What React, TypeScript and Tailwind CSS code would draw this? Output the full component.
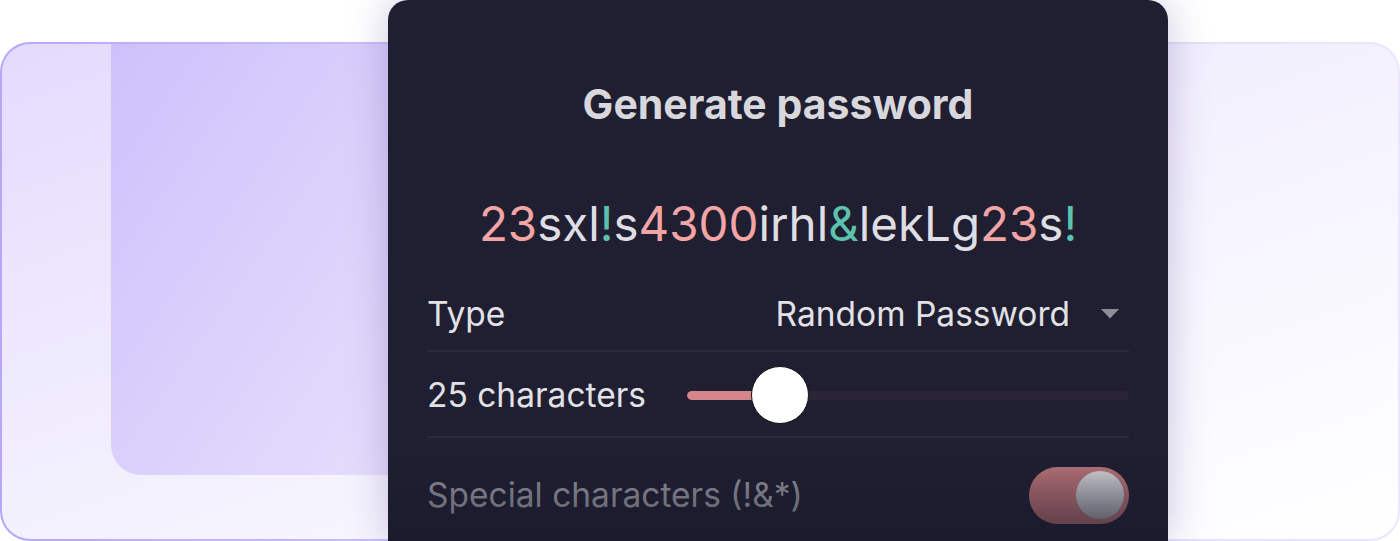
const pink = "text-[#f3a5a6]";
const gray = "text-[#dedee4]";
const teal = "text-[#5cc2ad]";

const pieces: [string, string][] = [
  ["23", pink],
  ["sxl", gray],
  ["!", teal],
  ["s", gray],
  ["4300", pink],
  ["irhl", gray],
  ["&", teal],
  ["lekLg", gray],
  ["23", pink],
  ["s", gray],
  ["!", teal],
];

const Backdrop = () => (
  <div className="col-start-1 row-start-1 mt-[42px] h-[499px] rounded-[30px] bg-linear-to-r from-[#b7a7fb] via-[#d9d0fc] to-[#ebe6fc] p-[2px]">
    <div className="flex h-full rounded-[28px] bg-linear-to-br from-[#e3dbfd] via-[#f4f1fe] to-white">
      <div className="ml-[109px] h-[431px] w-[300px] rounded-bl-[30px] bg-linear-to-br from-[#cdc1fb] to-[#e6dffc]" />
    </div>
  </div>
);

const Slider = () => (
  <div className="relative ml-[41px] flex h-[58px] flex-1 items-center">
    <div className="flex h-[9px] w-full overflow-hidden rounded-full bg-[#2a2434]">
      <div className="h-full w-[93px] rounded-full bg-[#d4868a]" />
    </div>
    <div className="absolute left-[64px] top-0 h-[58px] w-[58px] rounded-full border border-[#111] bg-white" />
  </div>
);

const Toggle = () => (
  <div className="flex h-[57px] w-[100px] items-center justify-end rounded-full bg-linear-to-b from-[#b8737a] to-[#935a63] pr-[5px]">
    <div className="h-[48px] w-[48px] rounded-full bg-linear-to-b from-[#d4d4d8] to-[#8a8a94]" />
  </div>
);

const Card = () => (
  <div className="relative z-10 col-start-1 row-start-1 ml-[388px] flex h-[541px] w-[780px] flex-col overflow-hidden rounded-t-[20px] bg-[#201f32] px-[39px] shadow-[0_0_40px_rgba(70,50,130,0.28)]">
    <h1 className="mt-[80px] text-center text-[41px] font-bold leading-[48px] text-[#d8d8dc]">
      Generate password
    </h1>
    <p className="mt-[67px] text-center text-[47.5px] leading-[58px]">
      {pieces.map(([t, c], i) => (
        <span key={i} className={c}>
          {t}
        </span>
      ))}
    </p>
    <div className="mt-[25px] flex h-[72px] items-center text-[33.5px] text-[#e2e2e6]">
      <span>Type</span>
      <span className="ml-auto">Random Password</span>
      <svg className="ml-[31px] mr-[10px]" width="18" height="10" viewBox="0 0 18 10">
        <path d="M0 0H18L9 9.5Z" fill="#8e8e98" />
      </svg>
    </div>
    <div className="h-[2px] bg-[#2a2a3c]" />
    <div className="flex h-[84px] items-center pt-[2px] text-[33.5px] text-[#e2e2e6]">
      <span>25 characters</span>
      <Slider />
    </div>
    <div className="h-[2px] bg-[#2a2a3c]" />
    <div className="mt-[27px] flex h-[60px] items-center text-[33.5px] text-[#8f8f9a]">
      <span>Special characters (!&amp;*)</span>
      <div className="ml-auto">
        <Toggle />
      </div>
    </div>
    <div className="pointer-events-none absolute inset-x-0 bottom-0 h-[90px] bg-linear-to-b from-transparent to-[#121624]/45" />
  </div>
);

export default function App() {
  return (
    <div className="grid h-[541px] w-[1400px] overflow-hidden bg-white font-['Inter',sans-serif]">
      <Backdrop />
      <Card />
    </div>
  );
}
